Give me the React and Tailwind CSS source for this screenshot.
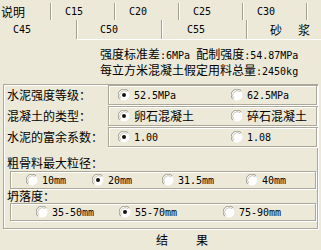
import React from 'react'

// ascii runs get the narrow mono face, like SimSun half-width glyphs
function T({ s }) {
  return s.split(/([\x00-\x7f]+)/).map((p, i) =>
    /^[\x00-\x7f]+$/.test(p)
      ? <span key={i} className="font-['DejaVu_Sans_Mono',monospace] text-[10px]">{p}</span>
      : <span key={i}>{p}</span>
  )
}

function Radio({ on }) {
  return (
    <svg width="12" height="12" viewBox="0 0 12 12" className="shrink-0">
      <circle cx="6" cy="6" r="5.5" fill="#fff" />
      <path d="M10.2 1.8 A5.9 5.9 0 0 0 1.8 10.2" stroke="#9c998c" fill="none" />
      <path d="M9.3 2.7 A4.7 4.7 0 0 0 2.7 9.3" stroke="#c9c6b8" fill="none" />
      {on && <circle cx="6" cy="6" r="2" fill="#111" />}
    </svg>
  )
}

function Opt({ on, label, className }) {
  return (
    <div className={`flex items-center gap-[4px] shrink-0 ${className}`}>
      <Radio on={on} />
      <span className="leading-[14px]"><T s={label} /></span>
    </div>
  )
}

const box = 'border border-[#aca899] shadow-[inset_1px_1px_0_#fff,1px_1px_0_#fff]'

function Tab({ label, className }) {
  return (
    <div className={`shrink-0 h-full flex items-center border-r border-[#a3a093] shadow-[1px_0_0_#fff] ${className}`}>
      <T s={label} />
    </div>
  )
}

export default function App() {
  return (
    <div className="w-[321px] h-[250px] overflow-hidden bg-[#ece9d8] text-black text-[12px] font-['Noto_Sans_CJK_SC',sans-serif]">
      {/* tab rows */}
      <div className="h-[20px] flex ml-[-13px] pt-[3px]">
        {['说明', 'C15', 'C20', 'C25', 'C30', 'C35'].map((t) => (
          <Tab key={t} label={t} className="w-[64px] pl-[14px]" />
        ))}
      </div>
      <div className="h-[19px] flex ml-[-8px]">
        <Tab label="C45" className="w-[85px] pl-[21px]" />
        <Tab label="C50" className="w-[85px] pl-[23px]" />
        <Tab label="C55" className="w-[85px] pl-[25px]" />
        <div className="shrink-0 h-full flex items-center pl-[23px] gap-[16px]">
          <span>砂</span><span>浆</span>
        </div>
      </div>

      {/* page */}
      <div className="border-t border-white ml-[77px] h-0" />
      <div className="pt-[7px] pl-[100px] leading-[14px]">
        <div><T s="强度标准差:6MPa 配制强度:54.87MPa" /></div>
        <div><T s="每立方米混凝土假定用料总量:2450kg" /></div>
      </div>

      <div className={`mt-[5px] mx-[3px] h-[145px] ${box} flex flex-col`}>
        <div className="flex flex-col gap-[1px]">
          {[
            ['水泥强度等级：', '52.5MPa', '62.5MPa'],
            ['混凝土的类型：', '卵石混凝土', '碎石混凝土'],
            ['水泥的富余系数：', '1.00', '1.08'],
          ].map(([l, a, b]) => (
            <div key={l} className="flex h-[20px]">
              <div className="w-[104px] pl-[3px] flex items-center">{l}</div>
              <div className={`flex-1 flex items-center pl-[9px] ${box}`}>
                <Opt on label={a} className="w-[113px]" />
                <Opt label={b} />
              </div>
            </div>
          ))}
        </div>

        <div className="mt-[8px] pl-[3px] leading-[16px]">粗骨料最大粒径：</div>
        <div className={`ml-[6px] mr-[1px] h-[18px] flex items-center pl-[15px] ${box}`}>
          <Opt label="10mm" className="w-[66px]" />
          <Opt on label="20mm" className="w-[70px]" />
          <Opt label="31.5mm" className="w-[84px]" />
          <Opt label="40mm" />
        </div>

        <div className="pl-[3px] leading-[14px]">坍落度：</div>
        <div className={`ml-[6px] mr-[1px] h-[18px] flex items-center pl-[25px] ${box}`}>
          <Opt label="35-50mm" className="w-[83px]" />
          <Opt on label="55-70mm" className="w-[104px]" />
          <Opt label="75-90mm" />
        </div>
      </div>

      <div className="mt-[3px] flex pl-[156px] gap-[28px] leading-[16px]">
        <span>结</span><span>果</span>
      </div>
    </div>
  )
}
